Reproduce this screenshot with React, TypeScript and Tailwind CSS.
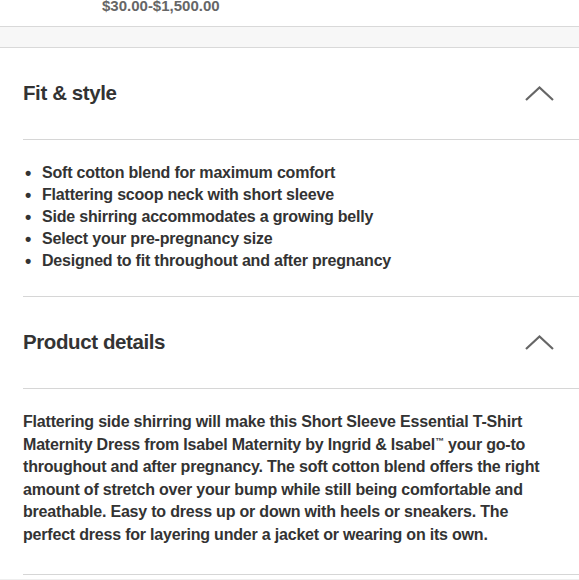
const FIT_POINTS = [
  'Soft cotton blend for maximum comfort',
  'Flattering scoop neck with short sleeve',
  'Side shirring accommodates a growing belly',
  'Select your pre-pregnancy size',
  'Designed to fit throughout and after pregnancy',
]

function ChevronUp() {
  return (
    <svg width="29" height="15" viewBox="0 0 29 15" fill="none" className="shrink-0">
      <path d="M1 14L14.5 1.5L28 14" stroke="#666" strokeWidth="2.2" />
    </svg>
  )
}

function SectionHeader({ title }: { title: string }) {
  return (
    <div className="flex h-[91px] items-center justify-between pr-[25px]">
      <h2 className="text-[20.5px] font-bold leading-none tracking-[-0.4px] text-[#333]">{title}</h2>
      <ChevronUp />
    </div>
  )
}

export default function App() {
  return (
    <div className="h-[580px] overflow-hidden bg-white font-['Liberation_Sans',Arial,sans-serif]">
      <div className="h-[26px] overflow-hidden">
        <p className="-mt-[4px] pl-[102px] text-[15px] font-bold leading-[20px] text-[#666]">
          $30.00-$1,500.00
        </p>
      </div>
      <div className="h-[22px] border-y border-[#d9d9d9] bg-[#f7f7f7]" />

      <div className="pl-[23px]">
        <SectionHeader title="Fit & style" />
        <div className="border-t border-[#d6d6d6] pt-[22px] pb-[24px]">
          <ul className="text-[16px] font-bold leading-[22px] tracking-[-0.2px] text-[#333]">
            {FIT_POINTS.map((item) => (
              <li key={item} className="flex">
                <span className="w-[19px] pl-[2px] text-[18px] leading-[22px]">•</span>
                <span>{item}</span>
              </li>
            ))}
          </ul>
        </div>

        <div className="border-t border-[#d6d6d6]">
          <SectionHeader title="Product details" />
        </div>
        <div className="border-t border-[#d6d6d6] pt-[22px] pr-[23px] pb-[28px]">
          <p className="text-[16px] font-bold leading-[22.5px] tracking-[-0.2px] text-[#333]">
            Flattering side shirring will make this Short Sleeve Essential T-Shirt Maternity Dress
            from Isabel Maternity by Ingrid &amp; Isabel
            <span className="align-top text-[9px] leading-[14px]">™</span> your go-to throughout
            and after pregnancy. The soft cotton blend offers the right amount of stretch over your
            bump while still being comfortable and breathable. Easy to dress up or down with heels
            or sneakers. The perfect dress for layering under a jacket or wearing on its own.
          </p>
        </div>
        <div className="h-[5px] border-t border-[#d6d6d6]" />
      </div>
      <div className="h-[10px] border-t border-[#eeeeee] bg-[#fafafa]" />
    </div>
  )
}
